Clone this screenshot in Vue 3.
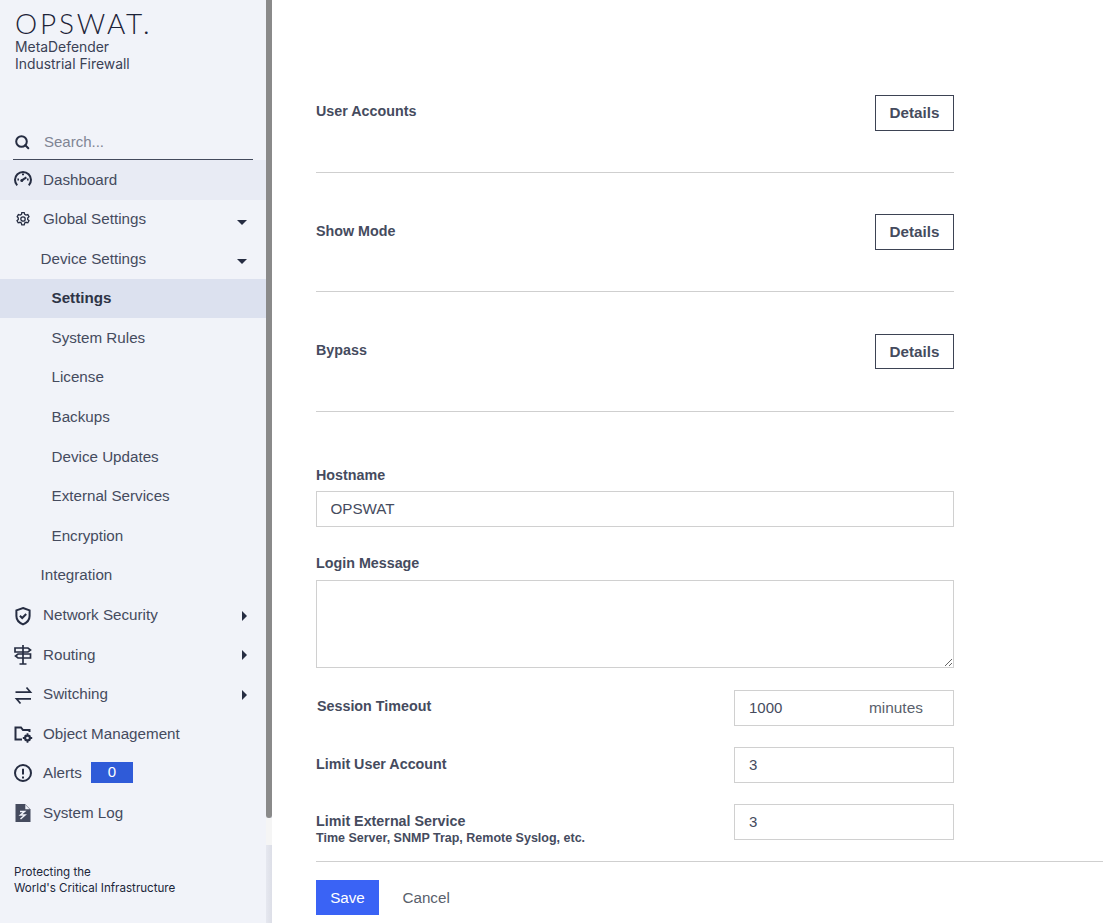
<script setup>
const icons = {
  dashboard: ['M3.200 15.400A8 8 0 1 1 14.800 15.400', 'M7.800 10.400 12.400 7.400', 'M3.400 9.500H5M13 9.500h1.600M9 3.600v1.600'],
  gear: ['M7.800 2.600h2.400l.5 1.800 1.300.7 1.800-.5 1.200 2.100-1.300 1.300v1.400l1.300 1.300-1.200 2.100-1.800-.5-1.300.7-.5 1.800H7.800l-.5-1.800-1.300-.7-1.800.5-1.200-2.100 1.300-1.300V8L3.200 6.700l1.200-2.100 1.800.5 1.300-.7z', 'M9 6.800a2.200 2.200 0 1 0 0 4.400 2.200 2.200 0 0 0 0-4.400z'],
  shield: ['M9 2 15.600 4.400V10C15.600 14.200 12.400 17 9 18.400 5.600 17 2.400 14.200 2.400 10V4.400z', 'M5.900 9.800 8.200 12 12.200 8'],
  route: ['M9 0V19M5.500 19H12.500', 'M1 3H14L16.500 5 14 7H1z', 'M16.500 9H4L1.500 11 4 13H16.500z'],
  swap: ['M1.500 7.200H16.500L12.500 2.500', 'M17 13.800H2.500L6.500 18.500'],
  folder: ['M8 15.500H1.500V3.500H7L9 6H15.500V8'],
  alert: ['M9 1a8 8 0 1 0 0 16A8 8 0 0 0 9 1z', 'M9 4.800v5.600M9 12.600v1.800'],
  log: ['M11 1 16.500 6.500H11z']
}
const nav = [
  { label: 'Dashboard', icon: 'dashboard', cls: 'hover' },
  { label: 'Global Settings', icon: 'gear', caret: 'down' },
  { label: 'Device Settings', level: 1, caret: 'down' },
  { label: 'Settings', level: 2, cls: 'active' },
  { label: 'System Rules', level: 2 },
  { label: 'License', level: 2 },
  { label: 'Backups', level: 2 },
  { label: 'Device Updates', level: 2 },
  { label: 'External Services', level: 2 },
  { label: 'Encryption', level: 2 },
  { label: 'Integration', level: 1 },
  { label: 'Network Security', icon: 'shield', caret: 'right' },
  { label: 'Routing', icon: 'route', caret: 'right' },
  { label: 'Switching', icon: 'swap', caret: 'right' },
  { label: 'Object Management', icon: 'folder' },
  { label: 'Alerts', icon: 'alert', badge: '0' },
  { label: 'System Log', icon: 'log' }
]
const detailRows = ['User Accounts', 'Show Mode', 'Bypass']
const strokeFor = (icon) => (icon === 'gear' ? 1.300 : icon === 'route' || icon === 'swap' ? 1.700 : 2)
</script>

<template>
  <div class="page">
    <aside class="sidebar">
      <div class="brand">
        <div class="logo">OPSWAT.</div>
        <div class="product">MetaDefender<br />Industrial Firewall</div>
      </div>
      <label class="search">
        <svg class="search-icon" viewBox="0 0 16 16" width="16" height="16" fill="none" stroke="#262d42" stroke-width="2">
          <circle cx="7.500" cy="7.500" r="5.300" />
          <path d="M11.300 11.300 14.300 14.300" stroke-linecap="round" />
        </svg>
        <input class="search-input" placeholder="Search..." />
      </label>
      <nav class="nav">
        <div v-for="item in nav" :key="item.label" class="nav-item" :class="[item.cls, item.level ? 'level-' + item.level : '']">
          <svg v-if="item.icon" class="nav-icon" viewBox="0 0 18 18" width="18" height="18" fill="none" stroke="#262d42" :stroke-width="strokeFor(item.icon)">
            <g v-if="item.icon === 'log'" stroke="none">
              <path d="M1.500 0H11L16.500 5.500V18H1.500z" fill="#454b5e" />
              <path d="M6 7.500H10.500L6.500 11H11L6.500 15" fill="none" stroke="#f1f3f9" stroke-width="1.500" />
              <path d="M11.300 .8 15.700 5.200H11.300z" fill="#f1f3f9" />
            </g>
            <path v-else v-for="d in icons[item.icon]" :key="d" :d="d" />
            <circle v-if="item.icon === 'dashboard'" cx="7.800" cy="10.400" r="1.500" fill="#262d42" stroke="none" />
            <g v-if="item.icon === 'folder'" fill="#262d42" stroke="none">
              <circle cx="13.500" cy="14" r="3.400" />
              <path d="M12.600 9.300h1.800v9.400h-1.800zM8.800 13.100h9.400v1.800H8.800z" />
              <path d="M10.200 11.900 11.500 10.600 16.800 15.900 15.500 17.200zM10.200 16 15.500 10.700 16.800 12 11.500 17.300z" />
              <circle cx="13.500" cy="14" r="1.300" fill="#f1f3f9" />
            </g>
          </svg>
          <span class="nav-label">{{ item.label }}</span>
          <span v-if="item.badge" class="badge">{{ item.badge }}</span>
          <span v-if="item.caret" class="caret" :class="'caret-' + item.caret"></span>
        </div>
      </nav>
      <div class="tagline">Protecting the<br />World's Critical Infrastructure</div>
      <div class="scroll-track">
        <div class="scroll-thumb"></div>
        <div class="scroll-rest"></div>
      </div>
    </aside>

    <main class="main">
      <div class="content">
        <section v-for="row in detailRows" :key="row" class="detail-row">
          <span class="label">{{ row }}</span>
          <button class="details-btn">Details</button>
        </section>

        <div class="field hostname">
          <label class="label">Hostname</label>
          <input class="input" value="OPSWAT" />
        </div>
        <div class="field login">
          <label class="label">Login Message</label>
          <textarea class="input textarea"></textarea>
        </div>

        <div class="inline-row first">
          <span class="label">Session Timeout</span>
          <div class="input-box">
            <input class="num" value="1000" />
            <span class="unit">minutes</span>
          </div>
        </div>
        <div class="inline-row">
          <span class="label">Limit User Account</span>
          <div class="input-box"><input class="num" value="3" /></div>
        </div>
        <div class="inline-row last">
          <div class="label-stack">
            <span class="label">Limit External Service</span>
            <span class="hint">Time Server, SNMP Trap, Remote Syslog, etc.</span>
          </div>
          <div class="input-box"><input class="num" value="3" /></div>
        </div>
      </div>
      <footer class="actions">
        <button class="save">Save</button>
        <button class="cancel">Cancel</button>
      </footer>
    </main>
  </div>
</template>

<style>
html, body { margin: 0; background: #fff; overflow: hidden; }
</style>

<style scoped>
.page {
  display: flex;
  width: 1103px;
  height: 923px;
  overflow: hidden;
  font-family: "Liberation Sans", Arial, sans-serif;
  color: #454b5e;
  background: #fff;
}
.sidebar {
  position: relative;
  flex: 0 0 272px;
  box-sizing: border-box;
  padding-right: 6px;
  height: 923px;
  background: #f1f3f9;
  display: flex;
  flex-direction: column;
}
.brand { padding: 9px 0 0 15px; height: 114px; box-sizing: border-box; }
.logo {
  font-family: Lato, sans-serif;
  font-weight: 300;
  font-size: 28px;
  line-height: 28px;
  letter-spacing: 2.800px;
  color: #1c2338;
  white-space: nowrap;
}
.product {
  font-family: Inter, sans-serif;
  font-size: 13.900px;
  line-height: 17px;
  color: #3a4155;
  margin-top: 2px;
}
.search {
  display: flex;
  align-items: center;
  margin: 10px 13px 0;
  height: 35px;
  border-bottom: 1px solid #434a5c;
}
.search-icon { margin: 0 0 0 1px; flex: none; }
.search-input {
  border: 0;
  outline: 0;
  background: transparent;
  font: 15px "Liberation Sans", Arial, sans-serif;
  margin-left: 14px;
  padding: 0;
  width: 190px;
  color: #454b5e;
}
.search-input::placeholder { color: #7f8594; opacity: 1; }
.nav { display: flex; flex-direction: column; }
.nav-item {
  display: flex;
  align-items: center;
  box-sizing: border-box;
  height: 39.600px;
  padding-left: 14px;
  padding-bottom: 1.600px;
  font-size: 15.200px;
  color: #454b5e;
  position: relative;
  white-space: nowrap;
}
.nav-item.hover { background: #e8ebf4; }
.nav-item.active { background: #dce1ef; font-weight: 700; color: #2e3446; }
.level-1 { padding-left: 40.500px; }
.level-2 { padding-left: 51.500px; }
.nav-icon { flex: none; margin-right: 11px; overflow: visible; }
.badge {
  margin-left: 9px;
  width: 42px;
  height: 21px;
  background: #2f5bd8;
  color: #fff;
  text-align: center;
  font-size: 15px;
  line-height: 20px;
}
.caret { position: absolute; }
.caret-down {
  right: 19px;
  top: 20px;
  border-left: 5px solid transparent;
  border-right: 5px solid transparent;
  border-top: 5px solid #262d42;
}
.caret-right {
  right: 19px;
  top: 15px;
  border-top: 5px solid transparent;
  border-bottom: 5px solid transparent;
  border-left: 5px solid #262d42;
}
.tagline {
  font-family: Inter, sans-serif;
  font-size: 11.600px;
  line-height: 16px;
  color: #20263a;
  margin: 30.500px 0 0 14px;
}
.scroll-track {
  position: absolute;
  right: 0;
  top: 0;
  bottom: 0;
  width: 6px;
  background: linear-gradient(to right, #e6e8f0, #dcdee7);
}
.scroll-thumb {
  width: 6px;
  height: 818px;
  background: #8a8a8a;
  border-radius: 0 0 3px 3px;
}
.scroll-rest { width: 6px; height: 27px; background: #f5f5f5; }
.main {
  flex: 1;
  min-width: 0;
  display: flex;
  flex-direction: column;
  height: 923px;
}
.content { width: 638px; margin-left: 44px; padding-top: 95px; height: 766px; box-sizing: border-box; }
.detail-row {
  display: flex;
  justify-content: space-between;
  align-items: flex-start;
  height: 77px;
  margin-bottom: 41.400px;
  border-bottom: 1px solid #cfcfcf;
}
.label {
  display: block;
  font-size: 14.300px;
  font-weight: 700;
  color: #454b5e;
  line-height: 16px;
}
.inline-row.first .label { padding-left: 1px; }
.detail-row .label { margin-top: 8.400px; }
.details-btn {
  width: 79px;
  height: 35.500px;
  box-sizing: border-box;
  background: #fff;
  border: 1px solid #3d4354;
  border-radius: 0;
  font: 700 15.200px "Liberation Sans", Arial, sans-serif;
  color: #454b5e;
  padding: 0 0 1px;
}
.field { display: flex; flex-direction: column; }
.hostname { margin-top: 55.400px; }
.hostname .label { margin-bottom: 8px; }
.login { margin-top: 28px; }
.login .label { margin-bottom: 9px; }
.input {
  box-sizing: border-box;
  width: 638px;
  height: 36px;
  border: 1px solid #d0d0d0;
  border-radius: 0;
  outline: 0;
  padding: 0 14px 1px 13.500px;
  font: 15.200px "Liberation Sans", Arial, sans-serif;
  color: #454b5e;
  background: #fff;
}
.textarea { height: 88px; display: block; }
.inline-row {
  display: flex;
  justify-content: space-between;
  align-items: flex-start;
  margin-top: 21.500px;
}
.inline-row.first { margin-top: 22px; }
.inline-row .label { margin-top: 9px; }
.inline-row.first .label { margin-top: 8px; }
.label-stack { display: flex; flex-direction: column; }
.hint { font-size: 12.500px; font-weight: 700; color: #454b5e; line-height: 16px; margin-top: 1px; }
.input-box {
  box-sizing: border-box;
  width: 220px;
  height: 35.500px;
  border: 1px solid #d0d0d0;
  display: flex;
  align-items: center;
  padding-left: 14px;
}
.num {
  border: 0;
  outline: 0;
  padding: 0;
  width: 120px;
  margin-top: -1px;
  font: 15px "Liberation Sans", Arial, sans-serif;
  color: #454b5e;
  background: transparent;
}
.unit { font-size: 15.400px; color: #5a5f6c; margin-top: 1px; }
.actions {
  margin-left: 44px;
  border-top: 1px solid #cfcfcf;
  margin-top: 95px;
  padding-top: 18px;
  display: flex;
  align-items: center;
}
.save {
  width: 63px;
  height: 35px;
  background: #3a63f5;
  color: #fff;
  border: 0;
  border-radius: 0;
  font: 15.200px "Liberation Sans", Arial, sans-serif;
  padding: 0;
}
.cancel {
  background: none;
  border: 0;
  margin-left: 23.500px;
  padding: 0;
  font: 15.200px "Liberation Sans", Arial, sans-serif;
  color: #5a5f6c;
}
</style>
